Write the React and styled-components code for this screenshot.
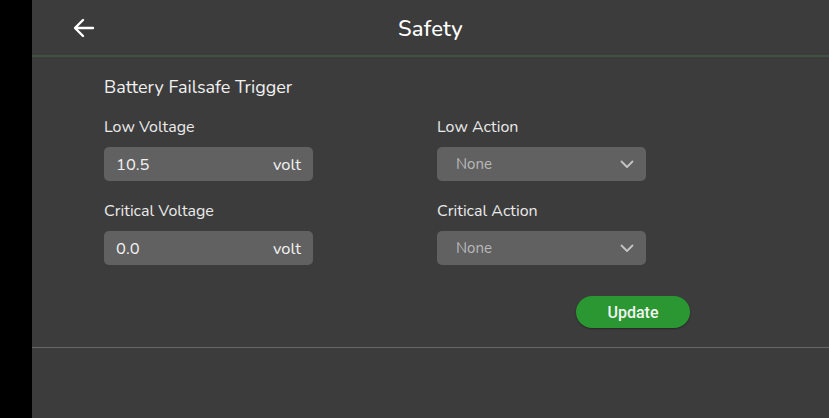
import styled, { createGlobalStyle } from 'styled-components';

const GlobalStyle = createGlobalStyle`
  html, body {
    margin: 0;
    padding: 0;
    background: #000;
  }
  body {
    font-family: "Nunito", "Lato", "Open Sans", sans-serif;
  }
`;

const Screen = styled.div`
  display: flex;
  width: 829px;
  height: 418px;
  background: #000;
`;

const Panel = styled.div`
  flex: 1;
  margin-left: 32px;
  background: #3c3c3c;
  display: flex;
  flex-direction: column;
`;

const Header = styled.header`
  position: relative;
  height: 55px;
  display: flex;
  align-items: center;
  justify-content: center;
  border-bottom: 2px solid #3f5244;
`;

const BackButton = styled.button`
  position: absolute;
  left: 40px;
  top: 16px;
  width: 24px;
  height: 24px;
  padding: 0;
  border: 0;
  background: none;
  display: flex;
  align-items: center;
  justify-content: center;
  color: #fff;
`;

const Title = styled.h1`
  margin: 2px 0 0 0;
  font-size: 22px;
  font-weight: 500;
  color: #fff;
  letter-spacing: 0.2px;
`;

const Content = styled.section`
  padding: 18px 0 19px 72px;
  border-bottom: 1px solid #676767;
`;

const SectionTitle = styled.h2`
  margin: 0 0 17px 0;
  font-size: 18px;
  font-weight: 400;
  color: #f0f0f0;
  line-height: 24px;
`;

const Grid = styled.div`
  display: grid;
  grid-template-columns: 333px 209px;
  row-gap: 19px;
`;

const Field = styled.div`
  display: flex;
  flex-direction: column;
`;

const Label = styled.label`
  font-size: 16px;
  color: #eaeaea;
  line-height: 22px;
  margin-bottom: 9px;
`;

const InputBox = styled.div`
  width: 209px;
  height: 34px;
  box-sizing: border-box;
  border-radius: 5px;
  background: #616161;
  display: flex;
  align-items: center;
  justify-content: space-between;
  padding: 0 12px;
  font-size: 16.5px;
  color: #f2f2f2;
`;

const Select = styled.div`
  width: 209px;
  height: 34px;
  box-sizing: border-box;
  border-radius: 5px;
  background: #616161;
  display: flex;
  align-items: center;
  justify-content: space-between;
  padding: 0 12px 0 19px;
  font-size: 15px;
  color: #b9b9b9;
`;

const Actions = styled.div`
  display: flex;
  padding-left: 472px;
  margin-top: 31px;
`;

const UpdateButton = styled.button`
  width: 114px;
  height: 32px;
  border: 0;
  border-radius: 16px;
  background: #2a9732;
  color: #f4f4f4;
  font-family: "Roboto", sans-serif;
  font-size: 16px;
  font-weight: 500;
  box-shadow: 0 1px 2px rgba(0, 0, 0, 0.35);
`;

const Arrow = () => (
  <svg width="22" height="20" viewBox="0 0 22 20" fill="none" stroke="#fff" strokeWidth="2.4" strokeLinecap="round" strokeLinejoin="round">
    <path d="M20 10H2.5M10 2L2 10l8 8" />
  </svg>
);

const Chevron = () => (
  <svg width="14" height="9" viewBox="0 0 14 9" fill="none" stroke="#c4c4c4" strokeWidth="1.8" strokeLinecap="round" strokeLinejoin="round">
    <path d="M1.5 1.5L7 7l5.5-5.5" />
  </svg>
);

const fields = [
  { label: 'Low Voltage', value: '10.5', action: 'Low Action' },
  { label: 'Critical Voltage', value: '0.0', action: 'Critical Action' },
];

export default function App() {
  return (
    <>
      <GlobalStyle />
      <Screen>
        <Panel>
          <Header>
            <BackButton aria-label="Back">
              <Arrow />
            </BackButton>
            <Title>Safety</Title>
          </Header>
          <Content>
            <SectionTitle>Battery Failsafe Trigger</SectionTitle>
            <Grid>
              {fields.map((f) => [
                <Field key={f.label}>
                  <Label>{f.label}</Label>
                  <InputBox>
                    <span>{f.value}</span>
                    <span>volt</span>
                  </InputBox>
                </Field>,
                <Field key={f.action}>
                  <Label>{f.action}</Label>
                  <Select>
                    <span>None</span>
                    <Chevron />
                  </Select>
                </Field>,
              ])}
            </Grid>
            <Actions>
              <UpdateButton>Update</UpdateButton>
            </Actions>
          </Content>
        </Panel>
      </Screen>
    </>
  );
}
